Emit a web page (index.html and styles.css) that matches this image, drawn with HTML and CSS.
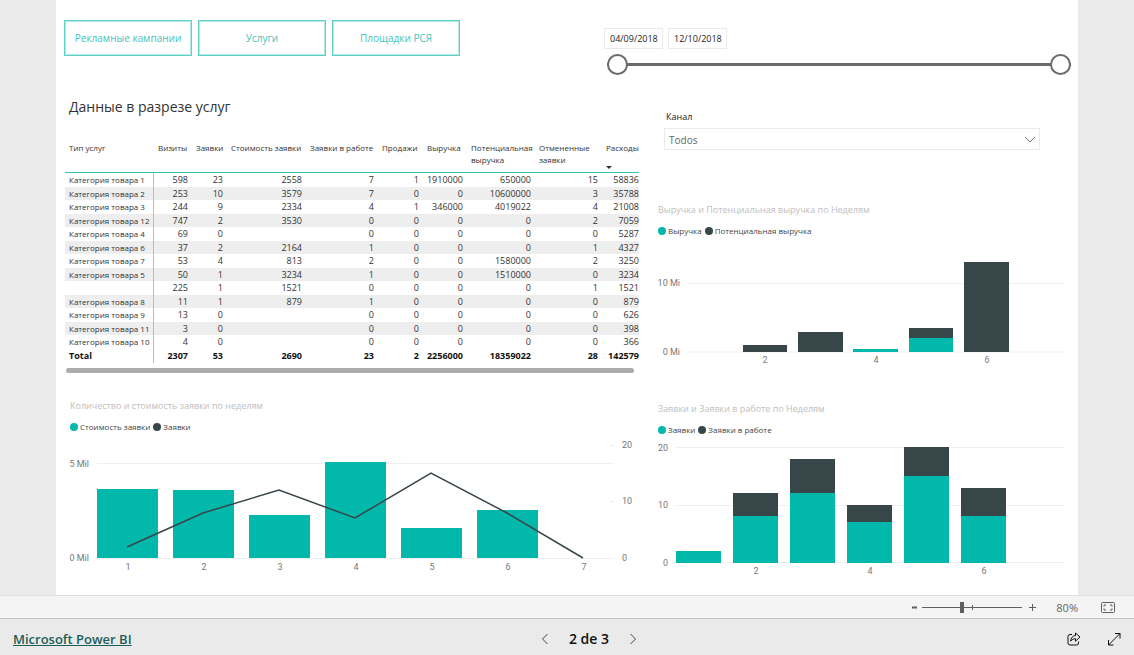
FILE: index.html
```
<!DOCTYPE html>
<html lang="ru">
<head>
<meta charset="utf-8">
<title>Данные в разрезе услуг</title>
<link rel="stylesheet" href="styles.css">
</head>
<body>
<main class="stage">
  <div class="sheet">
    <header class="top">
      <nav class="tabs">
        <button type="button">Рекламные кампании</button>
        <button type="button">Услуги</button>
        <button type="button">Площадки РСЯ</button>
      </nav>
      <div class="period">
        <div class="dates">
          <input type="text" value="04/09/2018" aria-label="Начало периода">
          <input type="text" value="12/10/2018" aria-label="Конец периода">
        </div>
        <div class="range">
          <input type="range" min="0" max="100" value="0" aria-label="Начало">
          <input type="range" min="0" max="100" value="100" aria-label="Конец">
        </div>
      </div>
    </header>

    <div class="columns">
      <div class="left">
        <h1>Данные в разрезе услуг</h1>
        <table class="data">
          <colgroup><col class="c-name"><col class="c-visits"><col class="c-req"><col class="c-cost"><col class="c-work"><col class="c-sales"><col class="c-rev"><col class="c-pot"><col class="c-cancel"><col class="c-spend"></colgroup>
          <thead>
            <tr><th>Тип услуг</th><th>Визиты</th><th>Заявки</th><th>Стоимость заявки</th><th>Заявки в работе</th><th>Продажи</th><th>Выручка</th><th>Потенциальная<br>выручка</th><th>Отмененные<br>заявки</th><th>Расходы<span class="sort"></span></th></tr>
          </thead>
          <tbody>
            <tr><td>Категория товара 1</td><td>598</td><td>23</td><td>2558</td><td>7</td><td>1</td><td>1910000</td><td>650000</td><td>15</td><td>58836</td></tr>
            <tr><td>Категория товара 2</td><td>253</td><td>10</td><td>3579</td><td>7</td><td>0</td><td>0</td><td>10600000</td><td>3</td><td>35788</td></tr>
            <tr><td>Категория товара 3</td><td>244</td><td>9</td><td>2334</td><td>4</td><td>1</td><td>346000</td><td>4019022</td><td>4</td><td>21008</td></tr>
            <tr><td>Категория товара 12</td><td>747</td><td>2</td><td>3530</td><td>0</td><td>0</td><td>0</td><td>0</td><td>2</td><td>7059</td></tr>
            <tr><td>Категория товара 4</td><td>69</td><td>0</td><td></td><td>0</td><td>0</td><td>0</td><td>0</td><td>0</td><td>5287</td></tr>
            <tr><td>Категория товара 6</td><td>37</td><td>2</td><td>2164</td><td>1</td><td>0</td><td>0</td><td>0</td><td>1</td><td>4327</td></tr>
            <tr><td>Категория товара 7</td><td>53</td><td>4</td><td>813</td><td>2</td><td>0</td><td>0</td><td>1580000</td><td>2</td><td>3250</td></tr>
            <tr><td>Категория товара 5</td><td>50</td><td>1</td><td>3234</td><td>1</td><td>0</td><td>0</td><td>1510000</td><td>0</td><td>3234</td></tr>
            <tr><td></td><td>225</td><td>1</td><td>1521</td><td>0</td><td>0</td><td>0</td><td>0</td><td>1</td><td>1521</td></tr>
            <tr><td>Категория товара 8</td><td>11</td><td>1</td><td>879</td><td>1</td><td>0</td><td>0</td><td>0</td><td>0</td><td>879</td></tr>
            <tr><td>Категория товара 9</td><td>13</td><td>0</td><td></td><td>0</td><td>0</td><td>0</td><td>0</td><td>0</td><td>626</td></tr>
            <tr><td>Категория товара 11</td><td>3</td><td>0</td><td></td><td>0</td><td>0</td><td>0</td><td>0</td><td>0</td><td>398</td></tr>
            <tr><td>Категория товара 10</td><td>4</td><td>0</td><td></td><td>0</td><td>0</td><td>0</td><td>0</td><td>0</td><td>366</td></tr>
          </tbody>
          <tfoot>
            <tr><td>Total</td><td>2307</td><td>53</td><td>2690</td><td>23</td><td>2</td><td>2256000</td><td>18359022</td><td>28</td><td>142579</td></tr>
          </tfoot>
        </table>
        <div class="scroll"></div>

        <section class="chart combo">
          <h2>Количество и стоимость заявки по неделям</h2>
          <ul class="legend"><li>Стоимость заявки</li><li class="dark">Заявки</li></ul>
          <svg viewBox="64 436 576 140">
            <path class="grid" d="M97 463.5H614M97 558.5H614M610 445.5h4M610 501.5h4"/>
            <path class="teal" d="M97 489h61v69H97zM173 490h61v68h-61zM249 515h61v43h-61zM325 462h61v96h-61zM401 528h61v30h-61zM477 510h61v48h-61z"/>
            <path class="line" d="M127 547L203 513L279 490L355 518L431 473L507 513L583 558"/>
            <g class="axis end"><text x="89" y="467">5 Mil</text><text x="89" y="561">0 Mil</text></g>
            <g class="axis"><text x="622" y="448">20</text><text x="622" y="504">10</text><text x="622" y="561">0</text></g>
            <g class="axis mid"><text x="128" y="570">1</text><text x="204" y="570">2</text><text x="280" y="570">3</text><text x="356" y="570">4</text><text x="432" y="570">5</text><text x="508" y="570">6</text><text x="584" y="570">7</text></g>
          </svg>
        </section>
      </div>

      <div class="right">
        <div class="filter">
          <label for="channel">Канал</label>
          <div class="select">
            <select id="channel"><option>Todos</option></select>
            <svg width="12" height="7" viewBox="0 0 12 7"><path d="M1 1l5 5 5-5"/></svg>
          </div>
        </div>

        <section class="chart revenue">
          <h2>Выручка и Потенциальная выручка по Неделям</h2>
          <ul class="legend"><li>Выручка</li><li class="dark">Потенциальная выручка</li></ul>
          <svg viewBox="658 240 406 128">
            <path class="grid" d="M687 283.500H1064M687 352H1064"/>
            <path class="slate" d="M743 345h44v7h-44zM798 332h45v20h-45zM909 328h44v10h-44zM964 262h45v90h-45z"/>
            <path class="teal" d="M853 349h45v3h-45zM909 338h44v14h-44z"/>
            <g class="axis end"><text x="680" y="286">10 Mi</text><text x="680" y="355">0 Mi</text></g>
            <g class="axis mid"><text x="765" y="363">2</text><text x="876" y="363">4</text><text x="987" y="363">6</text></g>
          </svg>
        </section>

        <section class="chart requests">
          <h2>Заявки и Заявки в работе по Неделям</h2>
          <ul class="legend"><li>Заявки</li><li class="dark">Заявки в работе</li></ul>
          <svg viewBox="658 439 406 138">
            <path class="grid" d="M675 447.500H1064M675 505.500H1064M675 562.500H1064"/>
            <path class="slate" d="M733 493h45v23h-45zM790 459h45v34h-45zM847 505h45v17h-45zM904 447h45v29h-45zM961 488h45v28h-45z"/>
            <path class="teal" d="M676 551h45v12h-45zM733 516h45v47h-45zM790 493h45v70h-45zM847 522h45v41h-45zM904 476h45v87h-45zM961 516h45v47h-45z"/>
            <g class="axis end"><text x="668" y="451">20</text><text x="668" y="508">10</text><text x="668" y="566">0</text></g>
            <g class="axis mid"><text x="756" y="574">2</text><text x="870" y="574">4</text><text x="984" y="574">6</text></g>
          </svg>
        </section>
      </div>
    </div>
  </div>
</main>

<div class="zoombar">
  <button type="button" aria-label="Уменьшить"><svg width="5" height="9" viewBox="0 0 5 9"><path d="M0 4.500h5" stroke-width="2"/></svg></button>
  <input type="range" min="0" max="100" value="39" aria-label="Масштаб">
  <button type="button" aria-label="Увеличить"><svg width="9" height="9" viewBox="0 0 9 9"><path d="M1 4.500h7M4.500 1v7"/></svg></button>
  <span class="percent">80%</span>
  <button type="button" class="fit" aria-label="По размеру страницы"><svg width="14" height="11" viewBox="0 0 14 11"><rect x=".5" y=".5" width="13" height="10" rx="1"/><path d="M5 3H3v1.500M9 3h2v1.500M5 8H3V6.500M9 8h2V6.500"/></svg></button>
</div>

<footer class="footer">
  <a href="#">Microsoft Power BI</a>
  <div class="pager">
    <button type="button" aria-label="Назад"><svg width="8" height="12" viewBox="0 0 8 12"><path d="M6.500 1L1.500 6l5 5"/></svg></button>
    <span>2 de 3</span>
    <button type="button" aria-label="Вперёд"><svg width="8" height="12" viewBox="0 0 8 12"><path d="M1.500 1l5 5-5 5"/></svg></button>
  </div>
  <div class="actions">
    <button type="button" aria-label="Поделиться"><svg width="14" height="14" viewBox="0 0 14 14"><path d="M5 2.500H3A2 2 0 0 0 1 4.500V11a2 2 0 0 0 2 2h6.500a2 2 0 0 0 2-2V9.500"/><path d="M8.500 1v2.500C5.500 3.700 4 6 3.700 9.200 5 7.500 6.500 6.700 8.500 6.700V9.200L13 5z"/></svg></button>
    <button type="button" aria-label="На весь экран"><svg width="14" height="14" viewBox="0 0 14 14"><path d="M8 1.500h5v5M13 1.500L1.500 13M1.500 8v5h5"/></svg></button>
  </div>
</footer>
</body>
</html>
```
FILE: styles.css
```
* { box-sizing: border-box; }

body {
  margin: 0;
  min-height: 100vh;
  display: flex;
  flex-direction: column;
  background: #eaeaea;
  color: #333;
  font-family: "Open Sans", "Noto Sans", sans-serif;
  font-size: 9px;
}

button, input, select { font: inherit; color: inherit; margin: 0; }
button { padding: 0; border: 0; background: none; display: flex; align-items: center; justify-content: center; }
h1, h2, ul { margin: 0; padding: 0; font-weight: 400; list-style: none; }

.stage { flex: 1; padding: 0 56px; display: flex; }
.sheet { flex: 1; background: #fff; padding: 20px 14px 0 8px; }

.top { display: grid; grid-template-columns: 540fr 467fr; align-items: start; margin-right: -7px; }
.tabs { display: flex; gap: 6px; }
.tabs button {
  width: 128px;
  height: 36px;
  border: 1px solid #5dd1c8;
  box-shadow: inset 0 0 0 1px #b5e9e5;
  background: #fff;
  color: #3fc6bb;
  font-size: 10px;
}

.period { padding-top: 8px; }
.dates { display: flex; gap: 5px; }
.dates input {
  width: 59px;
  height: 21px;
  padding: 0 0 0 5px;
  border: 1px solid #eaeaea;
  color: #222;
  font-size: 9px;
}
.range { display: grid; margin: 5px 0 0 3px; }
.range input {
  grid-area: 1 / 1;
  appearance: none;
  width: 100%;
  height: 21px;
  background: none;
  pointer-events: none;
}
.range input:first-child { background: linear-gradient(#6b6b6b, #6b6b6b) center / 100% 3px no-repeat; }
.range input::-webkit-slider-thumb {
  appearance: none;
  width: 21px;
  height: 21px;
  border: 2px solid #6b6b6b;
  border-radius: 50%;
  background: #fff;
  pointer-events: auto;
}

.columns { display: grid; grid-template-columns: 576fr 406fr; gap: 18px; }
.left { padding-top: 21px; }
h1 { padding-left: 5px; font-size: 14px; line-height: 22px; }

.data {
  width: calc(100% - 2px);
  margin: 24px 1px 0;
  table-layout: fixed;
  border-collapse: separate;
  border-spacing: 0;
  line-height: 12px;
}
.axis { font-family: Roboto, "Open Sans", sans-serif; }
.c-name { width: 89px; }
.c-visits { width: 38px; }
.c-req { width: 35px; }
.c-cost { width: 79px; }
.c-work { width: 72px; }
.c-sales { width: 45px; }
.c-rev { width: 44px; }
.c-pot { width: 68px; }
.c-cancel { width: 67px; }
.c-spend { width: 37px; }
.data th {
  height: 31px;
  padding: 0 0 0 4px;
  border-bottom: 1px solid #2ec4b6;
  font-size: 8px;
  font-weight: 400;
  text-align: left;
  vertical-align: top;
  white-space: nowrap;
}
.data td { height: 14px; padding: 0 4px 0 0; text-align: right; white-space: nowrap; }
.data tbody tr:nth-child(even) td { height: 13px; background: #eee; }
.data td:first-child { padding: 0 0 0 4px; border-right: 1px solid #7fd8d0; text-align: left; }
.data tbody td:first-child { font-size: 8px; }
.data td:last-child { padding-right: 0; }
.data tfoot td { color: #111; font-weight: 700; }
.sort { display: block; width: 5px; margin-top: 12px; border: solid transparent; border-width: 3px 3px 0; border-top-color: #333; }

.scroll { height: 5px; margin: 5px 6px 0 2px; border-radius: 3px; background: #adadad; }

.chart h2 { color: #c0c0c0; font-size: 9px; line-height: 14px; }
.chart svg { display: block; width: 100%; height: auto; margin-top: 2px; }
.combo { padding-top: 26px; }
.combo h2, .combo .legend { padding-left: 6px; }
.revenue { padding-top: 53px; }
.requests { padding-top: 34px; }

.legend { display: flex; gap: 3px; margin-top: 7px; color: #444; font-size: 8px; line-height: 14px; }
.legend li { display: flex; align-items: center; gap: 2px; }
.legend li::before { content: ""; width: 8px; height: 8px; border-radius: 50%; background: #01b8aa; }
.legend .dark::before { background: #374649; }

.grid { fill: none; stroke: #f0f0f0; }
.teal { fill: #01b8aa; }
.slate { fill: #374649; }
.line { fill: none; stroke: #374649; stroke-width: 1.5; }
.axis { fill: #777; font-size: 9px; }
.end { text-anchor: end; }
.mid { text-anchor: middle; }

.filter { margin: 35px 24px 0 6px; }
.filter label { display: block; padding-left: 2px; color: #222; line-height: 14px; }
.select { display: grid; align-items: center; margin-top: 4px; }
.select select {
  grid-area: 1 / 1;
  appearance: none;
  width: 100%;
  height: 22px;
  padding: 1px 4px 0;
  border: 1px solid #eaeaea;
  border-radius: 0;
  background: #fff;
  color: #666;
  font-size: 10px;
}
.select svg { grid-area: 1 / 1; justify-self: end; margin-right: 4px; pointer-events: none; fill: none; stroke: #777; }

.zoombar {
  display: flex;
  align-items: center;
  justify-content: flex-end;
  height: 24px;
  padding-right: 19px;
  border-top: 1px solid #e0e0e0;
  border-bottom: 1px solid #c4c4c4;
  background: #f4f4f4;
  color: #666;
}
.zoombar svg { fill: none; stroke: #605e5c; }
.zoombar input {
  appearance: none;
  width: 100px;
  height: 11px;
  margin: 0 6px 0 5px;
  background:
    linear-gradient(#605e5c, #605e5c) center / 100% 1px no-repeat,
    linear-gradient(#605e5c, #605e5c) center / 1px 5px no-repeat;
}
.zoombar input::-webkit-slider-thumb { appearance: none; width: 4px; height: 11px; background: #605e5c; }
.percent { margin: 0 23px 0 19px; font-size: 11px; }

.footer {
  display: grid;
  grid-template-columns: 12fr auto 11fr;
  align-items: center;
  height: 36px;
  padding: 3px 13px 0;
  color: #111;
  font-size: 13px;
  font-weight: 600;
}
.footer a { justify-self: start; color: #1a6058; }
.footer svg { fill: none; stroke: #111; }
.pager { display: flex; align-items: center; gap: 20px; font-size: 14px; }
.pager svg { stroke: #444; }
.actions { display: flex; justify-content: flex-end; gap: 26px; }
```
